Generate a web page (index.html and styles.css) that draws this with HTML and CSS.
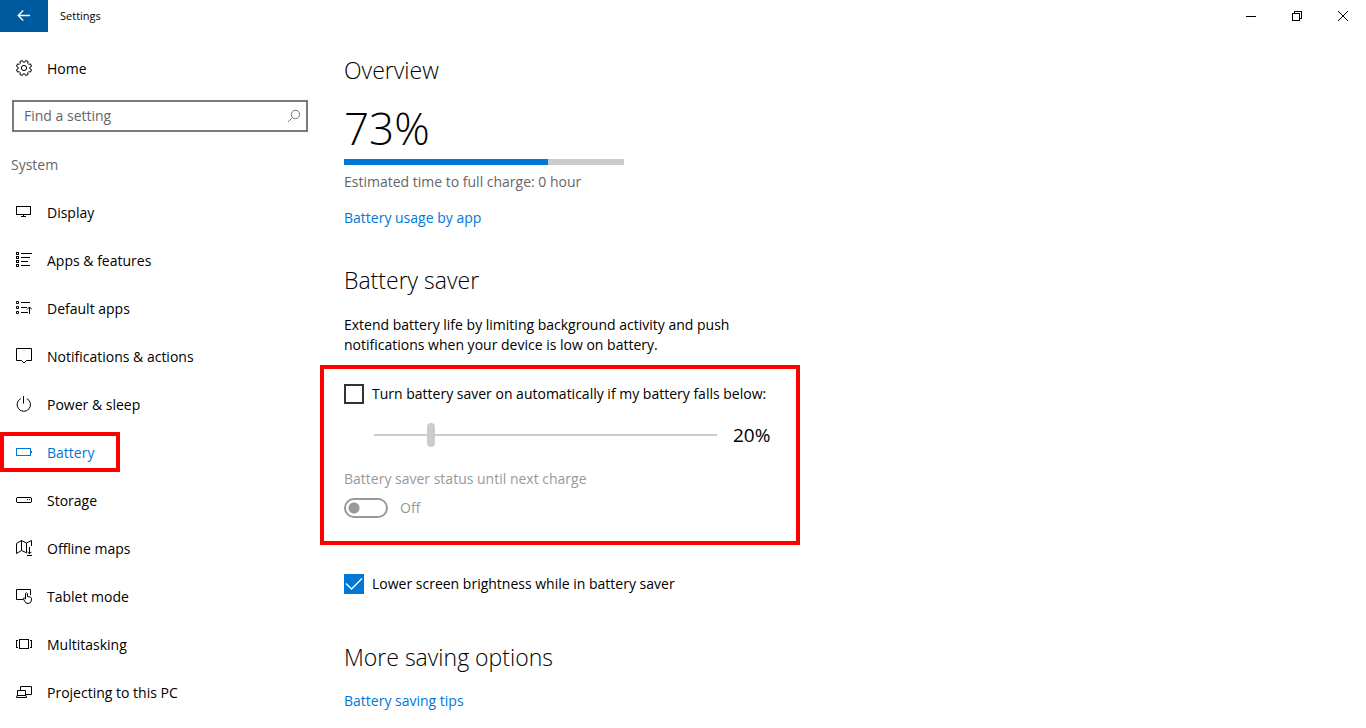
FILE: index.html
```html
<!DOCTYPE html>
<html lang="en">
<head>
<meta charset="utf-8">
<meta name="viewport" content="width=device-width, initial-scale=1">
<title>Settings</title>
<link rel="stylesheet" href="styles.css">
</head>
<body>
<header class="titlebar">
  <button class="back" type="button" aria-label="Back">
    <svg class="icon back-icon" viewBox="0 0 16 16"><path d="M14 7.500H2.500M7.200 2.500L2.200 7.500L7.200 12.500"/></svg>
  </button>
  <span class="title">Settings</span>
  <div class="window-buttons">
    <button class="window-button" type="button" aria-label="Minimize"><svg class="icon crisp" viewBox="0 0 16 16"><path d="M3 8.500H13"/></svg></button>
    <button class="window-button" type="button" aria-label="Restore"><svg class="icon crisp" viewBox="0 0 16 16"><path d="M3.500 5.500h7v7h-7zM5.500 5V3.500h7v7H11"/></svg></button>
    <button class="window-button" type="button" aria-label="Close"><svg class="icon" viewBox="0 0 16 16"><path d="M3 3L13 13M13 3L3 13"/></svg></button>
  </div>
</header>
<div class="layout">
  <nav class="sidebar" aria-label="Settings">
    <a class="nav-link" href="#home">
      <svg class="icon" viewBox="0 0 16 16"><path d="M13.900 8.900L15.500 9.700L14.500 12.100L12.800 11.600L11.600 12.800L12.100 14.500L9.700 15.500L8.900 13.900H7.100L6.300 15.500L3.900 14.500L4.400 12.800L3.200 11.600L1.500 12.100L.500 9.700L2.100 8.900V7.100L.500 6.300L1.500 3.900L3.200 4.400L4.400 3.200L3.900 1.500L6.300.500L7.100 2.100H8.900L9.700.500L12.100 1.500L11.600 3.200L12.800 4.400L14.500 3.900L15.500 6.300L13.900 7.100Z"/><circle cx="8" cy="8" r="2.600"/></svg>
      <span>Home</span>
    </a>
    <form class="search">
      <input class="search-input" type="text" placeholder="Find a setting" aria-label="Find a setting">
      <svg class="icon search-icon" viewBox="0 0 16 16"><circle cx="9.500" cy="6.500" r="4.200"/><path d="M6.500 9.500L2 14"/></svg>
    </form>
    <h2 class="group">System</h2>
    <a class="nav-link" href="#display">
      <svg class="icon crisp" viewBox="0 0 16 16"><path d="M.500 2.500h14v8H.500zM7.500 11v1M5 12.500h5"/></svg><span>Display</span></a>
    <a class="nav-link" href="#apps">
      <svg class="icon crisp" viewBox="0 0 16 16"><path d="M.500.500h2v2h-2zM.500 4.500h2v2h-2zM.500 8.500h2v2h-2zM.500 12.500h2v2h-2zM5 1.500h11M5 5.500h9M5 9.500h7M5 13.500h9"/></svg><span>Apps &amp; features</span></a>
    <a class="nav-link" href="#default-apps">
      <svg class="icon" viewBox="0 0 16 16"><path d="M.500 1.500h2v2h-2zM.500 6.500h2v2h-2zM.500 11.500h2v2h-2zM5 2.500h9M5 7.500h6M5 12.500h7M13.500 14V7M11 9.500L13.500 7L16 9.500"/></svg><span>Default apps</span></a>
    <a class="nav-link" href="#notifications">
      <svg class="icon" viewBox="0 0 16 16"><path d="M.500.500h15v12h-5L8 15L5.500 12.500h-5z"/></svg><span>Notifications &amp; actions</span></a>
    <a class="nav-link" href="#power">
      <svg class="icon" viewBox="0 0 16 16"><path d="M7.500 0v7.500M4.800 2.600A6.700 6.700 0 1 0 10.800 2.600"/></svg><span>Power &amp; sleep</span></a>
    <a class="nav-link nav-link-current" href="#battery" aria-current="page">
      <svg class="icon crisp" viewBox="0 0 16 16"><path d="M.500 4.500h14v7H.500zM15.500 7v2"/></svg><span>Battery</span></a>
    <a class="nav-link" href="#storage">
      <svg class="icon" viewBox="0 0 16 16"><path d="M1 5.500h14L15.500 6v4l-.500.500H1L.500 10V6zM11 7.500h1M13 7.500h1"/></svg><span>Storage</span></a>
    <a class="nav-link" href="#maps">
      <svg class="icon" viewBox="0 0 16 16"><path d="M11 12.500L10.500 12.800L5.500 10.500L.500 13.500V3.500L5.500.500L10.500 3L15.500.500V6M5.500.500V10.500M10.500 3V12.500M13.500 7V14M11.500 11.800L13.500 13.800L15.500 11.800M11 15.500h5"/></svg><span>Offline maps</span></a>
    <a class="nav-link" href="#tablet">
      <svg class="icon" viewBox="0 0 16 16"><path d="M7 11.500H.500v-10h14V7M9.500 11V5.500Q10.500 4 11.500 5.500V8.500L14.500 9.200Q15.500 9.500 15.500 10.500V12Q15.200 15.500 12 15.500Q9.500 15.500 8.800 13.500L7.200 10.500Q8 9 9.500 11"/></svg><span>Tablet mode</span></a>
    <a class="nav-link" href="#multitasking">
      <svg class="icon crisp" viewBox="0 0 16 16"><path d="M3.500 3.500h9v9h-9zM2 4.500H.500v7H2M14 4.500h1.500v7H14"/></svg><span>Multitasking</span></a>
    <a class="nav-link" href="#projecting">
      <svg class="icon" viewBox="0 0 16 16"><path d="M4.500 6V2.500h11v8H10M1.500 11.500v-5h8v5M1 11.500h9L10.500 13.500H.500z"/></svg><span>Projecting to this PC</span></a>
  </nav>
  <main class="content">
    <section class="section">
      <h1 class="heading">Overview</h1>
      <p class="level">73%</p>
      <div class="meter" role="meter" aria-label="Battery level" aria-valuemin="0" aria-valuemax="100" aria-valuenow="73"><div class="meter-fill" style="width:73%"></div></div>
      <p class="estimate">Estimated time to full charge: 0 hour</p>
      <a class="link" href="#usage">Battery usage by app</a>
    </section>
    <section class="section">
      <h2 class="heading">Battery saver</h2>
      <p class="intro">Extend battery life by limiting background activity and push notifications when your device is low on battery.</p>
      <div class="saver-box">
        <label class="check"><input class="checkbox" type="checkbox"><span>Turn battery saver on automatically if my battery falls below:</span></label>
        <div class="threshold">
          <input class="slider" id="threshold" type="range" min="5" max="100" value="20" disabled aria-label="Battery saver threshold">
          <output class="threshold-value" for="threshold">20%</output>
        </div>
        <label class="status" for="status">Battery saver status until next charge</label>
        <div class="switch-row">
          <input class="switch" id="status" type="checkbox" role="switch" disabled>
          <span>Off</span>
        </div>
      </div>
      <label class="check"><input class="checkbox" type="checkbox" checked><span>Lower screen brightness while in battery saver</span></label>
    </section>
    <section class="section section-more">
      <h2 class="heading">More saving options</h2>
      <a class="link link-tips" href="#tips">Battery saving tips</a>
    </section>
  </main>
</div>
</body>
</html>
```
FILE: styles.css
```css
* { box-sizing: border-box; }
body {
  margin: 0;
  background: #fff;
  color: #000;
  font: 14px/20px "Open Sans", "Noto Sans", sans-serif;
}
h1, h2, p { margin: 0; font-weight: 400; }
a { text-decoration: none; }
button { border: 0; padding: 0; background: none; color: inherit; font: inherit; }
input { margin: 0; font: inherit; }

.icon { width: 16px; height: 16px; flex: none; display: block; fill: none; stroke: currentColor; stroke-width: 1; }
.crisp { shape-rendering: crispEdges; }

.titlebar { display: flex; align-items: center; height: 32px; }
.back { display: flex; align-items: center; justify-content: center; width: 48px; height: 32px; background: #005a9e; color: #fff; }
.back-icon { stroke-width: 1.3; }
.title { margin-left: 12px; font-size: 11px; }
.window-buttons { display: flex; margin-left: auto; }
.window-button { display: flex; align-items: center; justify-content: center; width: 46px; height: 32px; }

.layout { display: flex; align-items: flex-start; }
.sidebar { flex: none; width: 320px; padding-top: 12px; }
.nav-link { display: flex; align-items: center; gap: 15px; height: 48px; padding-left: 16px; color: #000; }
.nav-link span { padding-top: 2px; }
.nav-link-current { width: 120px; height: 40px; margin: 4px 0; border: 4px solid #f00; padding-left: 12px; color: #0078d7; }
.search { display: flex; align-items: center; height: 32px; margin: 8px 12px 0; border: 2px solid #7a7a7a; padding: 0 4px 0 10px; color: #777; }
.search-input { flex: 1; min-width: 0; border: 0; padding: 0; outline: 0; background: none; color: #000; }
.search-input::placeholder { color: #666; opacity: 1; }
.group { padding: 23px 0 13px 11px; font-size: 14px; line-height: 20px; color: #666; }

.content { flex: 1; min-width: 0; padding: 22px 24px 16px; }
.section { margin-bottom: 36px; }
.heading { font-size: 23px; line-height: 32px; font-weight: 300; }
.level { margin-top: 14px; font-size: 44px; line-height: 56px; font-weight: 300; }
.meter { max-width: 280px; height: 6px; margin-top: 3px; background: #ccc; }
.meter-fill { height: 100%; background: #0078d7; }
.estimate { margin: 7px 0 16px; color: #666; }
.link { display: block; width: fit-content; color: #0078d7; }
.section-more { margin-top: 47px; }
.link-tips { margin-top: 18px; }
.intro { max-width: 420px; margin-top: 19px; }

.saver-box { max-width: 480px; margin: 10px 0 29px -24px; border: 4px solid #f00; padding: 15px 20px 23px; }
.check { display: flex; align-items: center; gap: 8px; width: fit-content; }
.checkbox { appearance: none; flex: none; width: 20px; height: 20px; border: 2px solid #333; background: #fff; }
.checkbox:checked {
  border: 0;
  background: #0078d7 url("data:image/svg+xml,%3Csvg xmlns='http://www.w3.org/2000/svg' viewBox='0 0 20 20'%3E%3Cpath d='M2 9.500L7.500 15L18 4.500' fill='none' stroke='white' stroke-width='1.300'/%3E%3C/svg%3E");
}
.threshold { display: flex; align-items: center; gap: 16px; max-width: 427px; height: 24px; margin-top: 19px; padding-left: 30px; }
.slider { appearance: none; flex: 1; min-width: 0; height: 24px; background: linear-gradient(#ccc, #ccc) center / 100% 2px no-repeat; }
.slider::-webkit-slider-thumb { appearance: none; width: 8px; height: 24px; border-radius: 4px; background: #ccc; }
.slider::-moz-range-thumb { width: 8px; height: 24px; border: 0; border-radius: 4px; background: #ccc; }
.threshold-value { width: 38px; font-size: 19px; line-height: 24px; }
.status { display: block; margin-top: 22px; color: #999; }
.switch-row { display: flex; align-items: center; gap: 12px; margin-top: 9px; color: #999; }
.switch { appearance: none; width: 44px; height: 20px; border: 2px solid #999; border-radius: 10px; background: radial-gradient(circle at 8px 8px, #999 5px, transparent 6px); }
```
